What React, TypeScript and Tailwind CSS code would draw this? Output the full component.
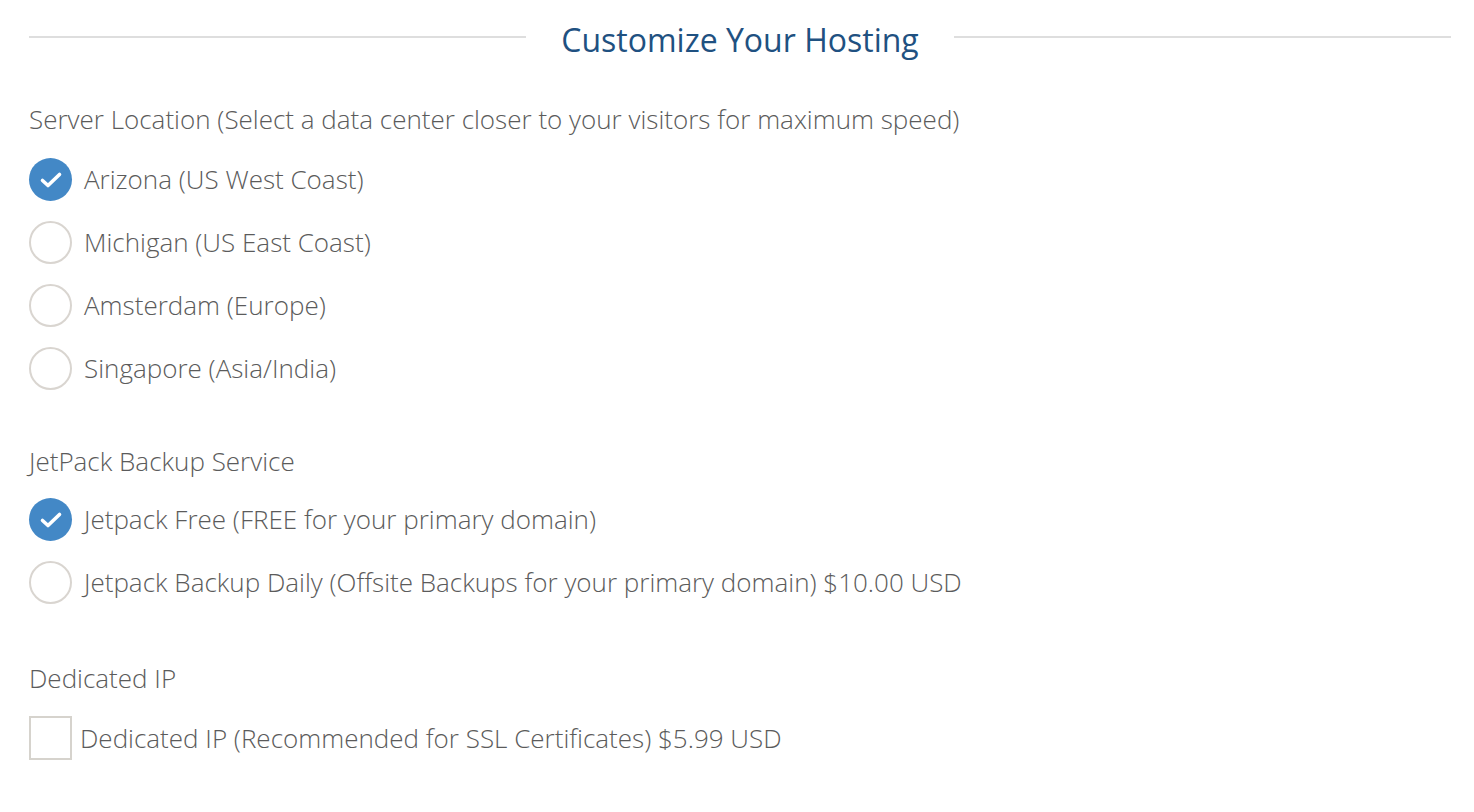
import React from 'react'

const font = { fontFamily: '"Open Sans", "Noto Sans", sans-serif' }

const Radio: React.FC<{ checked?: boolean }> = ({ checked }) =>
  checked ? (
    <span className="flex h-[43px] w-[43px] shrink-0 items-center justify-center rounded-full bg-[#4388c6]">
      <svg width="24" height="18" viewBox="0 0 24 18" fill="none">
        <path d="M3.5 9.5l5.5 5L20.5 3.5" stroke="white" strokeWidth="3.6" strokeLinecap="round" strokeLinejoin="round" />
      </svg>
    </span>
  ) : (
    <span className="h-[43px] w-[43px] shrink-0 rounded-full border-2 border-[#d9d5d0] bg-white" />
  )

const Option: React.FC<{ checked?: boolean; label: string }> = ({ checked, label }) => (
  <div className="flex h-[63px] items-center gap-[12px]">
    <Radio checked={checked} />
    <span>{label}</span>
  </div>
)

export default function App() {
  return (
    <div className="min-h-screen bg-white pl-[29px] pr-[23px] text-[26px] font-light text-[#5b5b5b]" style={font}>
      <div className="flex h-[74px] items-center gap-[35px]">
        <div className="h-[2px] flex-1 bg-[#dedede]" />
        <h2 className="mt-[5px] text-[32px] font-normal text-[#1f5181]">Customize Your Hosting</h2>
        <div className="h-[2px] flex-1 bg-[#dedede]" />
      </div>

      <div className="mt-[25px] leading-[40px]">Server Location (Select a data center closer to your visitors for maximum speed)</div>
      <div className="mt-[9px]">
        <Option checked label="Arizona (US West Coast)" />
        <Option label="Michigan (US East Coast)" />
        <Option label="Amsterdam (Europe)" />
        <Option label="Singapore (Asia/India)" />
      </div>

      <div className="mt-[41px] leading-[40px]">JetPack Backup Service</div>
      <div className="mt-[7px]">
        <Option checked label="Jetpack Free (FREE for your primary domain)" />
        <Option label="Jetpack Backup Daily (Offsite Backups for your primary domain) $10.00 USD" />
      </div>

      <div className="mt-[44px] leading-[40px]">Dedicated IP</div>
      <div className="mt-[18px] flex items-center gap-[8px]">
        <span className="h-[44px] w-[43px] shrink-0 border-2 border-[#d6d3cd] bg-white" />
        <span>Dedicated IP (Recommended for SSL Certificates) $5.99 USD</span>
      </div>
    </div>
  )
}
